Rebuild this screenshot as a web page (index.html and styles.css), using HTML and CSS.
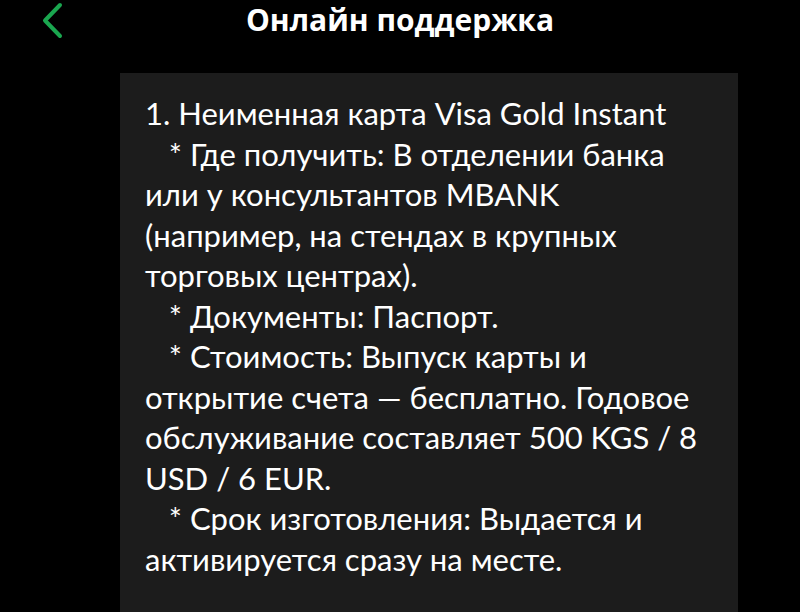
FILE: index.html
```html
<!DOCTYPE html>
<html lang="ru">
<head>
<meta charset="utf-8">
<link rel="stylesheet" href="styles.css">
</head>
<body>
<div class="screen">
  <header class="topbar">
    <button class="back" aria-label="Назад">
      <svg width="24" height="38" viewBox="0 0 24 38"><path d="M20 4 L5 19.5 L20 35" fill="none" stroke="#1aa64f" stroke-width="4" stroke-linecap="round" stroke-linejoin="round"/></svg>
    </button>
    <h1 class="title">Онлайн поддержка</h1>
  </header>
  <main class="chat">
    <div class="bubble"><p class="msg">1. Неименная карта Visa Gold Instant
   * Где получить: В отделении банка или у консультантов MBANK (например, на стендах в крупных торговых центрах).
   * Документы: Паспорт.
   * Стоимость: Выпуск карты и открытие счета — бесплатно. Годовое обслуживание составляет 500 KGS / 8 USD / 6 EUR.
   * Срок изготовления: Выдается и активируется сразу на месте.</p></div>
  </main>
</div>
</body>
</html>
```
FILE: styles.css
```css
html, body {
  margin: 0;
  padding: 0;
  background: #000;
  height: 100%;
  overflow: hidden;
}
.screen {
  width: 800px;
  height: 612px;
  background: #000;
  display: flex;
  flex-direction: column;
  font-family: "Open Sans", "Noto Sans", sans-serif;
  color: #fff;
}
.topbar {
  position: relative;
  height: 40px;
  display: flex;
  align-items: center;
  justify-content: center;
}
.back {
  position: absolute;
  left: 40px;
  top: 1px;
  background: none;
  border: 0;
  padding: 0;
  display: flex;
}
.title {
  margin: 0;
  font-size: 30px;
  font-weight: 700;
  letter-spacing: 0;
  line-height: 40px;
}
.chat {
  flex: 1;
  display: flex;
  padding: 33px 62px 0 120px;
}
.bubble {
  flex: 1;
  background: #1c1c1c;
  padding: 20px 35px 0 25px;
}
.msg {
  margin: 0;
  white-space: pre-wrap;
  font-family: "Lato", "Open Sans", sans-serif;
  font-size: 31px;
  line-height: 40.5px;
  font-weight: 400;
}
```
